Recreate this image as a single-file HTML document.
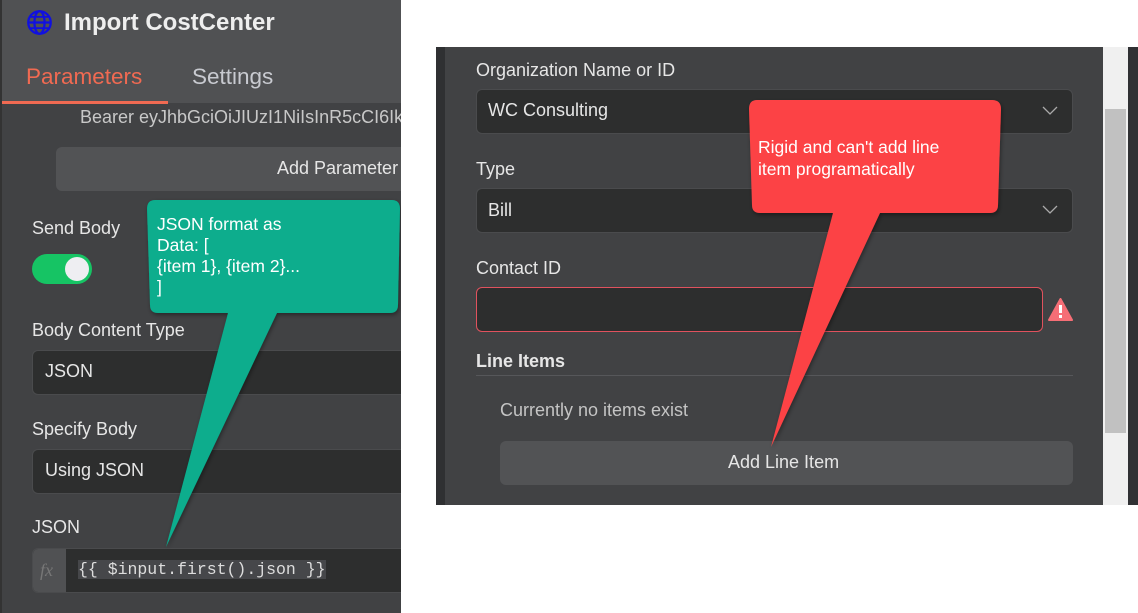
<!DOCTYPE html>
<html><head><meta charset="utf-8"><style>
*{margin:0;padding:0;box-sizing:border-box}
body{width:1138px;height:613px;background:#fff;position:relative;overflow:hidden;font-family:"Liberation Sans",sans-serif}
.a{position:absolute}
.t{color:#e6e6e6;font-size:18px;position:absolute;white-space:nowrap}
.inp{position:absolute;background:#2d2e2e;border:1px solid #4a4b4d;border-radius:6px}
#L{position:absolute;left:0;top:0;width:401px;height:613px;overflow:hidden;background:#414244}
</style></head><body>
<div id="L">
<div class="a" style="left:0;top:0;width:401px;height:103px;background:#505153"></div>
<div class="a" style="left:0;top:0;width:2px;height:613px;background:#333"></div>
<svg class="a" style="left:26px;top:9px" width="27" height="27" viewBox="0 0 24 24" fill="none" stroke="#1010e0" stroke-width="2"><circle cx="12" cy="12" r="10"/><ellipse cx="12" cy="12" rx="4.5" ry="10"/><line x1="2" y1="12" x2="22" y2="12"/><path d="M4 7h16M4 17h16" stroke-width="1.6"/></svg>
<div class="t" style="left:64px;top:9px;font-size:24px;font-weight:bold;color:#eee">Import CostCenter</div>
<div class="t" style="left:26px;top:64px;font-size:22.5px;color:#f06a52">Parameters</div>
<div class="t" style="left:192px;top:64px;font-size:22.5px;color:#c8cad0">Settings</div>
<div class="a" style="left:2px;top:101px;width:166px;height:3px;background:#f06a52"></div>
<div class="t" style="left:80px;top:107px;color:#c8c8c8">Bearer eyJhbGciOiJIUzI1NiIsInR5cCI6Ikp</div>
<div class="a" style="left:56px;top:147px;width:360px;height:44px;background:#525355;border-radius:6px"></div>
<div class="t" style="left:277px;top:158px">Add Parameter</div>
<div class="t" style="left:32px;top:218px">Send Body</div>
<div class="a" style="left:32px;top:254px;width:60px;height:30px;background:#16c464;border-radius:15px"></div>
<div class="a" style="left:65px;top:257px;width:24px;height:24px;background:#eeeef2;border-radius:50%"></div>
<div class="t" style="left:32px;top:320px">Body Content Type</div>
<div class="inp" style="left:32px;top:350px;width:390px;height:45px"></div>
<div class="t" style="left:45px;top:361px">JSON</div>
<div class="t" style="left:32px;top:419px">Specify Body</div>
<div class="inp" style="left:32px;top:449px;width:390px;height:45px"></div>
<div class="t" style="left:45px;top:460px">Using JSON</div>
<div class="t" style="left:32px;top:517px">JSON</div>
<div class="a" style="left:32px;top:548px;width:390px;height:45px;background:#2d2e2e;border:1px solid #4a4b4d;border-radius:6px;overflow:hidden"><div style="position:absolute;left:0;top:0;width:33px;height:45px;background:#505153"></div></div>
<div class="t" style="left:40px;top:560px;font-family:'Liberation Serif',serif;font-style:italic;color:#777;font-size:18px">fx</div>
<div class="t" style="left:78px;top:560px;font-family:'Liberation Mono',monospace;font-size:16.5px;background:#46474a;color:#ddd">{{ $input.first().json }}</div>
<svg class="a" style="left:140px;top:195px" width="270" height="360"><defs><filter id="s"><feDropShadow dx="1" dy="2" stdDeviation="2" flood-opacity=".4"/></filter></defs>
<path filter="url(#s)" fill="#07ad8d" d="M15 5 L252 5 Q260 5 260 14 L258 110 Q258 118 250 118 L137 118 L26 352 L88 118 L18 118 Q10 118 10 110 L7 14 Q7 5 15 5Z"/></svg>
<div class="t" style="left:157px;top:214px;font-size:17.5px;line-height:21px;color:#fff;white-space:pre">JSON format as
Data: [
{item 1}, {item 2}...
]</div>
</div>
<!-- right panel -->
<div class="a" style="left:436px;top:47px;width:667px;height:458px;background:#414244"></div>
<div class="a" style="left:436px;top:47px;width:9px;height:458px;background:#2f3032"></div>
<div class="a" style="left:1103px;top:47px;width:25px;height:458px;background:#f0f0f0"></div>
<div class="a" style="left:1105px;top:109px;width:21px;height:324px;background:#c1c1c1"></div>
<div class="a" style="left:1128px;top:47px;width:10px;height:458px;background:#303134"></div>
<div class="t" style="left:476px;top:60px">Organization Name or ID</div>
<div class="inp" style="left:476px;top:89px;width:597px;height:45px"></div>
<div class="t" style="left:488px;top:100px">WC Consulting</div>
<div class="t" style="left:476px;top:159px">Type</div>
<div class="inp" style="left:476px;top:188px;width:597px;height:45px"></div>
<div class="t" style="left:488px;top:200px">Bill</div>
<svg class="a" style="left:1042px;top:104px" width="16" height="12"><path d="M1 3l7 7 7-7" stroke="#aaa" fill="none" stroke-width="1.3"/></svg>
<svg class="a" style="left:1042px;top:203px" width="16" height="12"><path d="M1 3l7 7 7-7" stroke="#aaa" fill="none" stroke-width="1.3"/></svg>
<div class="t" style="left:476px;top:258px">Contact ID</div>
<div class="a" style="left:476px;top:287px;width:567px;height:45px;background:#2d2e2e;border:1px solid #e0525e;border-radius:6px"></div>
<svg class="a" style="left:1048px;top:298px" width="25" height="23" viewBox="0 0 25 23"><path d="M12.5 1 L24 22 L1 22Z" fill="#f66e76" stroke="#f66e76" stroke-linejoin="round" stroke-width="2"/><rect x="11" y="7" width="3" height="8" fill="#fff"/><rect x="11" y="17" width="3" height="3" fill="#fff"/></svg>
<div class="t" style="left:476px;top:351px;font-weight:bold">Line Items</div>
<div class="a" style="left:476px;top:375px;width:597px;height:1px;background:#56575a"></div>
<div class="t" style="left:500px;top:400px;color:#c4c4c4">Currently no items exist</div>
<div class="a" style="left:500px;top:441px;width:573px;height:44px;background:#525355;border-radius:6px"></div>
<div class="t" style="left:728px;top:452px">Add Line Item</div>
<svg class="a" style="left:740px;top:95px" width="270" height="360"><defs><filter id="s2"><feDropShadow dx="1" dy="2" stdDeviation="2" flood-opacity=".4"/></filter></defs>
<path filter="url(#s2)" fill="#fc4244" d="M17 5 L252 5 Q261 5 261 14 L258 110 Q258 118 250 118 L140 118 L31 352 L93 118 L20 118 Q12 118 12 110 L9 14 Q9 5 17 5Z"/></svg>
<div class="t" style="left:758px;top:136px;font-size:17.5px;line-height:22px;color:#fff;white-space:pre">Rigid and can't add line
item programatically</div>
</body></html>
